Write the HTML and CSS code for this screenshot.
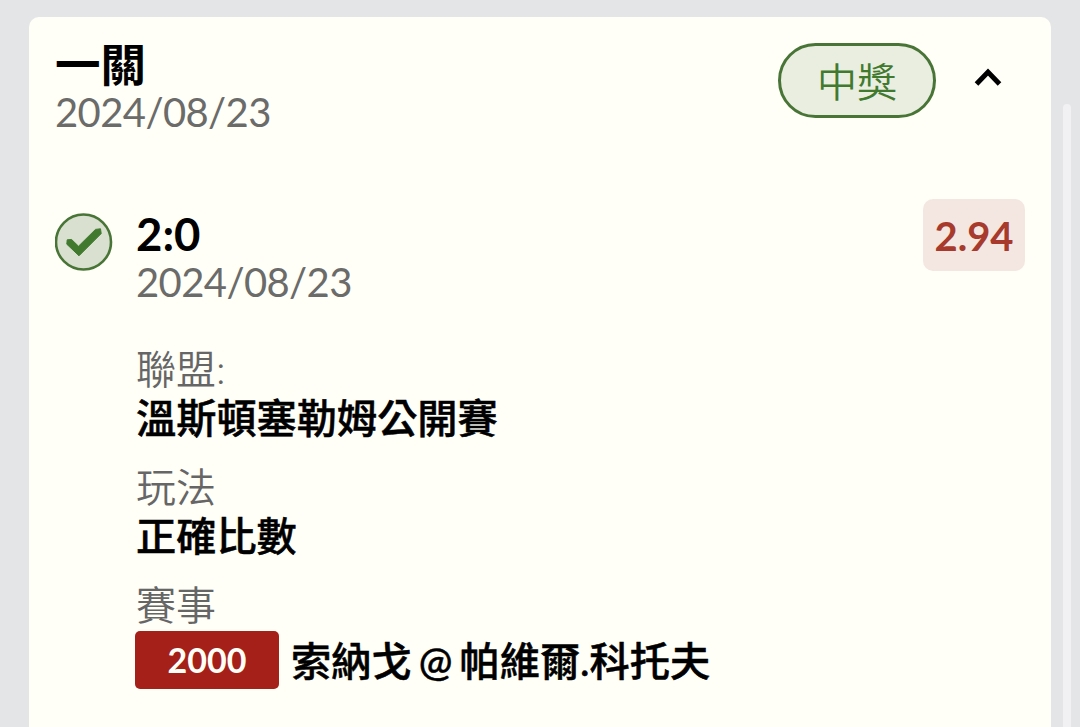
FILE: index.html
```html
<!DOCTYPE html>
<html lang="zh-TW">
  <head>
    <meta charset="UTF-8" />
    <meta name="viewport" content="width=device-width, initial-scale=1.0" />
    <title>投注紀錄</title>
    <link rel="stylesheet" href="styles.css">
  </head>
  <body>
    <main class="ticket">
      <header class="ticket-header">
        <div>
          <h1 class="ticket-title">一關</h1>
          <p class="date">2024/08/23</p>
        </div>
        <div class="ticket-actions">
          <span class="status">中獎</span>
          <button class="toggle" aria-label="收合">
            <svg width="28" height="20" viewBox="0 0 28 20">
              <path d="M2.5 16 L14 4 L25.5 16" />
            </svg>
          </button>
        </div>
      </header>

      <section class="bet">
        <svg class="check" width="58" height="58" viewBox="0 0 58 58">
          <circle cx="28.5" cy="29" r="27.5" />
          <path class="tick" d="M12.2 26.8 L16.6 26.5 L23.5 33.2 L40.5 16.4 L45.5 15.8 L46.2 20.6 L24 42.8 L11.8 31.2 Z" />
        </svg>
        <div class="bet-body">
          <h2 class="pick">2:0</h2>
          <p class="date">2024/08/23</p>
          <dl class="details">
            <dt>聯盟:</dt>
            <dd>溫斯頓塞勒姆公開賽</dd>
            <dt>玩法</dt>
            <dd>正確比數</dd>
            <dt>賽事</dt>
            <dd class="match"><span class="code">2000</span><span class="teams">索納戈 @ 帕維爾.科托夫</span></dd>
          </dl>
        </div>
        <span class="odds">2.94</span>
      </section>
    </main>
    <div class="scrollbar"></div>
  </body>
</html>
```

FILE: styles.css
```css
* {
  margin: 0;
  padding: 0;
  box-sizing: border-box;
}

body {
  height: 100vh;
  overflow: hidden;
  display: flex;
  background-color: #e4e5e7;
  font-family: Lato, "Noto Sans CJK TC", sans-serif;
  font-size: 40px;
  color: #000;
  padding: 17px 9px 0 29px;
}

.ticket {
  width: 1022px;
  height: 740px;
  background-color: #fffff8;
  border-radius: 10px;
  padding: 24px 26px 0;
}

.ticket-header {
  display: flex;
  justify-content: space-between;
  height: 158px;
}

.ticket-title {
  font-size: 45.5px;
  line-height: 47px;
  font-weight: bold;
}

.date {
  font-size: 40px;
  line-height: 48px;
  letter-spacing: -0.6px;
  color: #6b6b69;
}

.ticket-actions {
  display: flex;
  align-items: center;
  height: 75px;
  margin-top: 2px;
}

.status {
  width: 158px;
  height: 75px;
  border: 3px solid #487536;
  border-radius: 38px;
  background-color: #eaeee1;
  color: #417a2f;
  font-weight: 350;
  line-height: 73px;
  text-align: center;
}

.toggle {
  border: none;
  background: none;
  margin: 0 23px 5px 38px;
  line-height: 0;
}

.toggle path {
  fill: none;
  stroke: #000;
  stroke-width: 5;
}

.bet {
  display: flex;
  align-items: flex-start;
}

.check {
  margin-top: 14px;
}

.check circle {
  fill: #d9e0d0;
  stroke: #487536;
  stroke-width: 2.6;
}

.check .tick {
  fill: #417a2f;
  stroke: #417a2f;
  stroke-width: 1;
  stroke-linejoin: round;
}

.bet-body {
  flex: 1;
  padding: 11px 0 0 23px;
}

.pick {
  font-size: 45.5px;
  line-height: 48px;
  font-weight: bold;
}

.details {
  padding-top: 39px;
}

.details dt {
  line-height: 48px;
  font-weight: 350;
  color: #666;
}

.details dd {
  font-size: 40.2px;
  line-height: 49px;
  font-weight: 500;
  -webkit-text-stroke: 0.5px;
  margin-bottom: 21px;
}

.details .match {
  display: flex;
  align-items: center;
  margin-left: -1px;
  padding-top: 1px;
  line-height: 58px;
}

.code {
  width: 144px;
  height: 58px;
  border-radius: 5px;
  background-color: #a52018;
  color: #fffff8;
  font-size: 34px;
  font-weight: bold;
  -webkit-text-stroke: 0;
  text-align: center;
}

.teams {
  margin-left: 12px;
  padding-top: 2px;
  word-spacing: -3px;
}

.odds {
  width: 102px;
  height: 72px;
  border-radius: 10px;
  background-color: #f4e7e1;
  color: #a73a2c;
  font-weight: bold;
  line-height: 74px;
  text-align: center;
}

.scrollbar {
  width: 8px;
  margin: 87px 0 0 12px;
  border-radius: 4px 4px 0 0;
  background-color: #f1f1f3;
}
```
